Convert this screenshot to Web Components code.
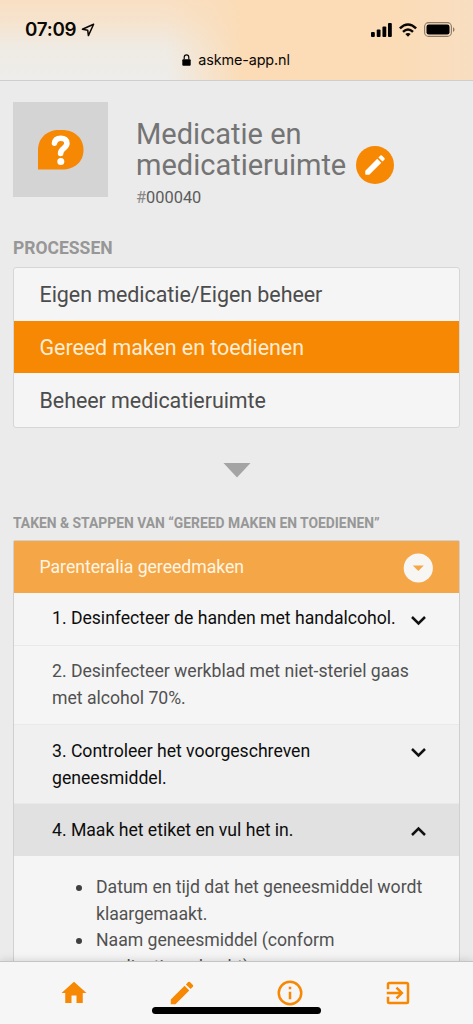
<!DOCTYPE html>
<html lang="nl">
<head>
<meta charset="utf-8">
<title>AskMe</title>
<style>
html,body{margin:0;height:100%}
body{font-family:Roboto,"Liberation Sans",sans-serif;background:#ebebeb;overflow:hidden}
</style>
</head>
<body>
<askme-app></askme-app>
<script>
const define=(name,html)=>customElements.define(name,class extends HTMLElement{
  constructor(){super();this.attachShadow({mode:'open'}).innerHTML='<style>*{box-sizing:border-box}</style>'+html;}
});

define('status-bar',`<style>
:host{display:flex;flex-direction:column;box-sizing:border-box;height:81px;flex:none;border-bottom:1px solid #cfcecd;color:#0b0805;font-family:Inter,sans-serif;
background:linear-gradient(90deg,transparent 35%,#fbdcb7 51%,#fbdcb7 84%,#f8dec1 100%),linear-gradient(180deg,#f9e0c4 0,#f6e3cd 25%,#efebe4 60%,#eeedeb 100%)}
.top{display:flex;align-items:center;height:40px;padding:19px 18px 0 25px}
.time{font-weight:600;font-size:18.800px;letter-spacing:-.25px;line-height:21px}
.loc{margin-left:5px}
.r{margin-left:auto;display:flex;align-items:center;gap:7px}
.url{display:flex;align-items:center;justify-content:center;gap:7px;height:39px;font-size:14.400px;letter-spacing:-.12px;padding-right:1px}
svg{display:block}
</style>
<div class="top"><span class="time">07:09</span>
<svg class="loc" width="14" height="14" viewBox="0 0 14 14"><path d="M12.600 1.300 1.400 6.300l5.300.9.7 5.400z" fill="none" stroke="#0b0805" stroke-width="1.500" stroke-linejoin="round"/></svg>
<div class="r">
<svg width="21" height="14" viewBox="0 0 22 14" preserveAspectRatio="none"><rect x="0" y="9" width="4" height="5" rx="1"/><rect x="6" y="6.500" width="4" height="7.500" rx="1"/><rect x="12" y="3.500" width="4" height="10.500" rx="1"/><rect x="17.800" y="0" width="4" height="14" rx="1"/></svg>
<svg width="18" height="14" viewBox="0 0 18 14" fill="none" stroke="#0b0805" stroke-width="2.500"><path d="M.9 5.400Q9-2.400 17.100 5.400M4 8.800Q9 4.200 14 8.800"/><path d="M6.300 11.100Q9 8.900 11.700 11.100L9 13.800z" fill="#0b0805" stroke="none"/></svg>
<svg width="31" height="15" viewBox="0 0 31 15"><rect x=".6" y=".6" width="26.800" height="13.800" rx="4" fill="none" stroke="#8b7a68" stroke-width="1.100"/><rect x="2.500" y="2.500" width="23" height="10" rx="2.300"/><path d="M29 5q1.500 1 1.500 2.500T29 10z" fill="#8b7a68"/></svg>
</div></div>
<div class="url"><svg width="9" height="12" viewBox="0 0 9 12"><path d="M2.200 5.500V3.500a2.300 2.700 0 0 1 4.600 0v2" fill="none" stroke="#0b0805" stroke-width="1.200"/><rect x=".3" y="5.200" width="8.400" height="6.600" rx="1"/></svg><span>askme-app.nl</span></div>`);

define('edit-button',`<style>
:host{display:flex;align-items:center;justify-content:center;width:38px;height:38px;border-radius:50%;background:#f68803;flex:none}
</style><svg width="26" height="26" viewBox="0 0 24 24" fill="#fff"><path d="M3 17.800Q3 17.400 3.300 17.100L14.060 6.190l3.750 3.750L7 20.700Q6.700 21 6.300 21H3.600Q3 21 3 20.400zM20.700 7.040a1 1 0 0 0 0-1.410l-2.330-2.340a1 1 0 0 0-1.410 0l-1.830 1.830 3.750 3.750z"/></svg>`);

define('protocol-header',`<style>
:host{display:flex;padding:21px 13px 0;height:115px;box-sizing:border-box;margin-bottom:42px;color:#747474}
.av{width:95px;height:95px;background:#d4d4d4;display:flex;justify-content:center;align-items:center;flex:none}
.info{margin-left:28px;padding-top:17px}
h1{margin:0;font-size:29px;line-height:31px;font-weight:400;display:flex;align-items:flex-end;white-space:nowrap}
edit-button{margin:0 0 -3px 10px}
.id{font-size:16.390px;line-height:20px;margin-top:7px;color:#5c5c5c}
.id i{font-style:normal;color:#8a8a8a}
</style><div class="av"><svg width="46" height="40" viewBox="0 0 46 40"><path d="M0 39.500V20C0 8 9 0 21 0h3C37 0 45.500 8.500 45.500 20S37 39.500 24 39.500z" fill="#f68803"/><path d="M16.500 13.200c.5-3.600 3-5 6.200-5 3.700 0 6.200 1.900 6.200 5.100 0 5.400-6.300 4.500-6.300 10.200" fill="none" stroke="#fff" stroke-width="5.600" stroke-linecap="round" stroke-linejoin="round"/><circle cx="22.800" cy="31.400" r="3.500" fill="#fff"/></svg></div>
<div class="info"><h1><span>Medicatie en<br>medicatieruimte</span><edit-button></edit-button></h1><div class="id"><i>#</i>000040</div></div>`);

define('section-title',`<style>
:host{display:block;padding:0 13px;font-weight:700;color:#979797;font-size:17.500px;line-height:20px;white-space:nowrap}
:host([small]){font-size:13.870px}
</style><slot></slot>`);

define('process-list',`<style>
:host{display:block;box-sizing:border-box;margin:9px 13px 0;border:1px solid #d6d6d6;border-radius:3px;background:#f5f5f5}
</style><slot></slot>`);
define('process-item',`<style>
:host{display:flex;align-items:center;height:53px;padding:0 25.500px;font-size:21.440px;letter-spacing:-.04px;color:#4c4c4c;white-space:nowrap;box-sizing:border-box}
:host([active]){background:#f68803;color:#fdecd2;height:52px}
:host(:last-child){height:54px}
</style><slot></slot>`);

define('down-marker',`<style>
:host{display:flex;justify-content:center;padding:35px 0 35px}
svg{display:block}
</style><svg width="28" height="15" viewBox="0 0 28 15"><path d="M.5 0h27L14 14.500z" fill="#a4a4a4"/></svg>`);

define('task-card',`<style>
:host{display:block;box-sizing:border-box;margin:7px 13px 0;border:1px solid #d0d0d0;border-radius:2px;background:#f5f5f5}
header{display:flex;align-items:center;justify-content:space-between;height:52px;padding:0 26px 0 25.500px;background:#f5a748;color:#fff5e3;font-size:17.660px;letter-spacing:-.03px}
svg{margin-top:2px}
</style><header><slot name="title"></slot><svg width="30" height="30" viewBox="0 0 30 30"><circle cx="15.300" cy="15" r="14.600" fill="#f8f6f3"/><path d="M9.800 12.500h11L15.300 18z" fill="#f5a748"/></svg></header><slot></slot>`);

define('task-step',`<style>
:host{display:flex;justify-content:space-between;padding:12.200px 32px 13.300px 38px;border-bottom:1px solid #e9e9e9;font-size:17.660px;letter-spacing:-.025px;line-height:26.500px;color:#515151}
:host([expandable]){color:#0d0d0d}
:host([shade]){background:#f0f0f0;padding-top:13px;padding-bottom:12px}
:host([open]){background:#e1e1e1;border-color:#e1e1e1;padding-top:13px;padding-bottom:11px}
svg{display:none;flex:none;margin-top:10px}
:host([shade]) svg,:host([open]) svg{margin-top:9px}
:host([expandable]) svg{display:block}
:host([open]) svg{transform:rotate(180deg)}
span{white-space:nowrap}
</style><span><slot></slot></span><svg width="17" height="11" viewBox="0 0 17 11"><path d="M2 2l6.500 6.500L15 2" fill="none" stroke="#111" stroke-width="2.500"/></svg>`);

define('step-detail',`<style>
:host{display:block;padding:18.300px 0 0;font-size:17.660px;letter-spacing:-.025px;line-height:26.500px;color:#515151;white-space:nowrap}
ul{margin:0;padding-left:82px;list-style:none}
li{display:flex;margin-left:-20px}
li::before{content:"";width:6px;height:6px;border-radius:50%;background:#3f3f3f;margin:10.500px 14px 0 0}
</style><ul><li><span>Datum en tijd dat het geneesmiddel wordt<br>klaargemaakt.</span></li><li><span>Naam geneesmiddel (conform<br>medicatieopdracht)</span></li></ul>`);

define('tab-bar',`<style>
:host{display:grid;grid-template-columns:repeat(4,108px);justify-content:center;box-sizing:border-box;padding:16px 1px 0 0;height:63px;flex:none;background:#f6f6f6;border-top:1px solid #c4c4c4;box-shadow:0 -1px 8px rgba(0,0,0,.13);position:relative;z-index:1}
svg{display:block;margin:0 auto}
.home{position:absolute;left:152px;top:45px;width:169px;height:7px;border-radius:4px;background:#000}
</style>
<svg width="30" height="30" viewBox="0 0 24 24" fill="#f68803"><path d="M10 20v-6h4v6h5v-8h3L12 3 2 12h3v8z"/></svg>
<svg width="30" height="30" viewBox="0 0 24 24" fill="#f68803"><path d="M3 17.250V21h3.750L17.810 9.940l-3.750-3.750zM20.710 7.040a1 1 0 0 0 0-1.410l-2.340-2.340a1 1 0 0 0-1.410 0l-1.830 1.830 3.750 3.750z"/></svg>
<svg width="30" height="30" viewBox="0 0 24 24" fill="#f68803"><path d="M11 7h2v2h-2zm0 4h2v6h-2zm1-9a10 10 0 1 0 0 20 10 10 0 0 0 0-20m0 18a8 8 0 1 1 0-16 8 8 0 0 1 0 16"/></svg>
<svg width="30" height="30" viewBox="0 0 24 24" fill="#f68803"><path d="M10.090 15.590 11.500 17l5-5-5-5-1.410 1.410L12.670 11H3v2h9.670zM19 3H5a2 2 0 0 0-2 2v4h2V5h14v14H5v-4H3v4a2 2 0 0 0 2 2h14a2 2 0 0 0 2-2V5a2 2 0 0 0-2-2"/></svg>
<div class="home"></div>`);

define('askme-app',`<style>
:host{display:flex;flex-direction:column;height:1024px;width:473px;overflow:hidden}
main{flex:1;min-height:0;overflow:hidden}
</style>
<status-bar></status-bar>
<main>
<protocol-header></protocol-header>
<section-title>PROCESSEN</section-title>
<process-list><process-item>Eigen medicatie/Eigen beheer</process-item><process-item active>Gereed maken en toedienen</process-item><process-item>Beheer medicatieruimte</process-item></process-list>
<down-marker></down-marker>
<section-title small>TAKEN &amp; STAPPEN VAN “GEREED MAKEN EN TOEDIENEN”</section-title>
<task-card><span slot="title">Parenteralia gereedmaken</span>
<task-step expandable>1. Desinfecteer de handen met handalcohol.</task-step>
<task-step>2. Desinfecteer werkblad met niet-steriel gaas<br>met alcohol 70%.</task-step>
<task-step expandable shade>3. Controleer het voorgeschreven<br>geneesmiddel.</task-step>
<task-step expandable open>4. Maak het etiket en vul het in.</task-step>
<step-detail></step-detail></task-card>
</main>
<tab-bar></tab-bar>`);
</script>
</body>
</html>
